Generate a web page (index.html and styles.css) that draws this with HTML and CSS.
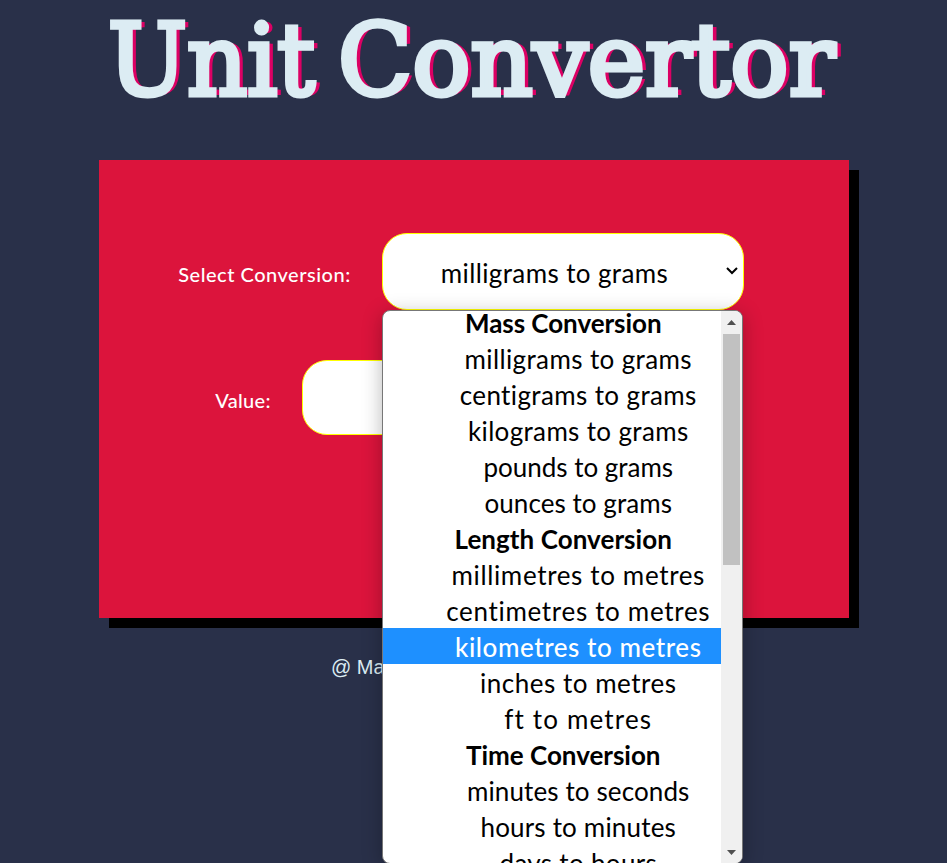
FILE: index.html
```html
<!DOCTYPE html>
<html lang="en">
<head>
<meta charset="utf-8">
<title>Unit Convertor</title>
<link rel="stylesheet" href="styles.css">
</head>
<body>
<h1 class="title"><span class="word first"><span class="title-text" data-width="207">Unit</span></span> <span class="word"><span class="title-text" data-width="497">Convertor</span></span></h1>
<main class="card">
  <div class="row">
    <label class="label" data-width="171">Select Conversion:</label>
    <div class="select">
      <span data-width="226">milligrams to grams</span>
      <svg class="chevron" viewBox="0 0 12 8"><path d="M1 1l5 5 5-5" fill="none" stroke="#000" stroke-width="2"/></svg>
      <div class="popup">
        <div class="options">
          <div class="group"><span data-width="195">Mass Conversion</span></div>
          <div class="option"><span data-width="226">milligrams to grams</span></div>
          <div class="option"><span data-width="236">centigrams to grams</span></div>
          <div class="option"><span data-width="219">kilograms to grams</span></div>
          <div class="option"><span data-width="188">pounds to grams</span></div>
          <div class="option"><span data-width="186">ounces to grams</span></div>
          <div class="group"><span data-width="216">Length Conversion</span></div>
          <div class="option"><span data-width="252">millimetres to metres</span></div>
          <div class="option"><span data-width="263">centimetres to metres</span></div>
          <div class="option active"><span data-width="245">kilometres to metres</span></div>
          <div class="option"><span data-width="195">inches to metres</span></div>
          <div class="option"><span data-width="146">ft to metres</span></div>
          <div class="group"><span data-width="193">Time Conversion</span></div>
          <div class="option"><span data-width="221">minutes to seconds</span></div>
          <div class="option"><span data-width="194">hours to minutes</span></div>
          <div class="option"><span data-width="156">days to hours</span></div>
        </div>
        <div class="scrollbar">
          <svg class="arrow" viewBox="0 0 9 5"><path d="M0 5L4.5 0 9 5z" fill="#505050"/></svg>
          <div class="thumb"></div>
          <svg class="arrow down" viewBox="0 0 9 5"><path d="M0 0L4.500 5 9 0z" fill="#505050"/></svg>
        </div>
      </div>
    </div>
  </div>
  <div class="row">
    <label class="label" data-width="54">Value:</label>
    <div class="input"></div>
  </div>
</main>
<footer class="footer">@ Ma</footer>
<script src="script.js"></script>
</body>
</html>
```
FILE: styles.css
```css
* { box-sizing: border-box; }
body {
  margin: 0;
  height: 863px;
  overflow: hidden;
  background: #293049;
  font-family: Lato, "Open Sans", sans-serif;
}
[data-width] { white-space: nowrap; }
.title {
  display: flex;
  margin: 0;
  height: 160px;
  padding-left: 108px;
  font: 100px/121px "DejaVu Serif", serif;
  color: #dcecf3;
}
.word { width: 499px; }
.first { width: 230px; flex: none; }
.title-text {
  display: inline-block;
  transform-origin: left;
  -webkit-text-stroke: 5px #dcecf3;
  text-shadow: 4px 0 #dc0064, 6px 0 #dc0064;
}
.card {
  width: 750px;
  height: 458px;
  margin-left: 99px;
  padding-top: 73px;
  background: #dc143c;
  box-shadow: 10px 10px #000;
}
.row {
  display: flex;
  justify-content: center;
  align-items: center;
  gap: 31px;
  height: 77px;
  margin-bottom: 49px;
  padding-right: 26px;
}
.row + .row { padding-right: 69px; }
.label {
  color: #fff;
  font-size: 20px;
  line-height: 30px;
  padding-top: 4px;
  font-weight: 500;
}
.select, .input {
  width: 362px;
  height: 77px;
  border: 1.5px solid #ff0;
  border-radius: 25px;
  background: #fff;
}
.input { height: 75px; }
.select {
  position: relative;
  display: flex;
  align-items: center;
  justify-content: space-between;
  padding: 2px 5px 0 58px;
  font-size: 26px;
}
.chevron { width: 12px; height: 8px; margin-bottom: 3px; }
.popup {
  position: absolute;
  z-index: 2;
  left: -1px;
  top: 76px;
  width: 361px;
  height: 554px;
  display: flex;
  overflow: hidden;
  border: 1px solid #777;
  border-radius: 8px;
  background: #fff;
  box-shadow: 0 4px 20px rgba(0, 0, 0, .28);
}
.options { width: 338px; margin-top: -7px; }
.option, .group {
  height: 36px;
  display: flex;
  align-items: center;
  justify-content: center;
  padding: 2px 0 0 53px;
  line-height: 34px;
}
.group { font-weight: bold; padding-left: 23px; }
.active { background: #1e90ff; color: #fff; font-weight: 500; }
.scrollbar {
  display: flex;
  flex-direction: column;
  align-items: center;
  width: 21px;
  padding: 9px 0 8px;
  background: #f0f0f0;
}
.arrow { width: 9px; height: 5px; }
.down { margin-top: auto; }
.thumb { width: 17px; height: 231px; margin-top: 9px; background: #c1c1c1; }
.footer {
  padding: 37px 0 0 331px;
  font: 20px/24px "Liberation Sans", sans-serif;
  color: #dcecf3;
}
```
FILE: script.js
```js
document.querySelectorAll('[data-width]').forEach(function (el) {
  var target = Number(el.dataset.width);
  var range = document.createRange();
  range.selectNodeContents(el);
  var natural = range.getBoundingClientRect().width;
  if (el.classList.contains('title-text')) {
    el.style.transform = 'scaleX(' + target / natural + ')';
    return;
  }
  el.style.letterSpacing = (target + 1.5 - natural) / el.textContent.length + 'px';
});
```
